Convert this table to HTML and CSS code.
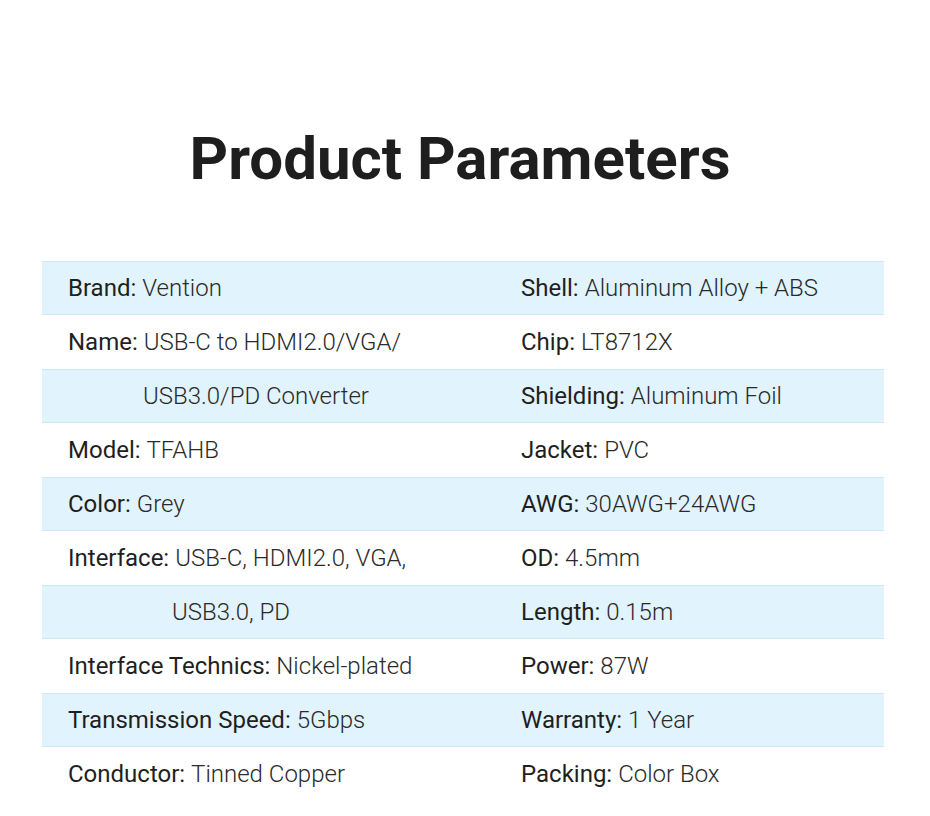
FILE: index.html
```html
<!DOCTYPE html>
<html lang="en">
<head>
<meta charset="utf-8">
<title>Product Parameters</title>
<link rel="stylesheet" href="styles.css">
</head>
<body>
<main class="page">
  <h1 class="title">Product Parameters</h1>
  <section class="params">
    <div class="row alt">
      <div class="cell"><span class="label">Brand:</span> <span class="value">Vention</span></div>
      <div class="cell"><span class="label">Shell:</span> <span class="value">Aluminum Alloy + ABS</span></div>
    </div>
    <div class="row">
      <div class="cell"><span class="label">Name:</span> <span class="value">USB-C to HDMI2.0/VGA/</span></div>
      <div class="cell"><span class="label">Chip:</span> <span class="value">LT8712X</span></div>
    </div>
    <div class="row alt">
      <div class="cell indent-name"><span class="value">USB3.0/PD Converter</span></div>
      <div class="cell"><span class="label">Shielding:</span> <span class="value">Aluminum Foil</span></div>
    </div>
    <div class="row">
      <div class="cell"><span class="label">Model:</span> <span class="value">TFAHB</span></div>
      <div class="cell"><span class="label">Jacket:</span> <span class="value">PVC</span></div>
    </div>
    <div class="row alt">
      <div class="cell"><span class="label">Color:</span> <span class="value">Grey</span></div>
      <div class="cell"><span class="label">AWG:</span> <span class="value">30AWG+24AWG</span></div>
    </div>
    <div class="row">
      <div class="cell"><span class="label">Interface:</span> <span class="value">USB-C, HDMI2.0, VGA,</span></div>
      <div class="cell"><span class="label">OD:</span> <span class="value">4.5mm</span></div>
    </div>
    <div class="row alt">
      <div class="cell indent-interface"><span class="value">USB3.0, PD</span></div>
      <div class="cell"><span class="label">Length:</span> <span class="value">0.15m</span></div>
    </div>
    <div class="row">
      <div class="cell"><span class="label">Interface Technics:</span> <span class="value">Nickel-plated</span></div>
      <div class="cell"><span class="label">Power:</span> <span class="value">87W</span></div>
    </div>
    <div class="row alt">
      <div class="cell"><span class="label">Transmission Speed:</span> <span class="value">5Gbps</span></div>
      <div class="cell"><span class="label">Warranty:</span> <span class="value">1 Year</span></div>
    </div>
    <div class="row">
      <div class="cell"><span class="label">Conductor:</span> <span class="value">Tinned Copper</span></div>
      <div class="cell"><span class="label">Packing:</span> <span class="value">Color Box</span></div>
    </div>
  </section>
</main>
</body>
</html>
```

FILE: styles.css
```css
html, body {
  margin: 0;
  padding: 0;
  background: #ffffff;
}

body {
  font-family: Roboto, "Liberation Sans", Arial, sans-serif;
  color: #222222;
}

.page {
  width: 930px;
  height: 816px;
  overflow: hidden;
}

.title {
  margin: 0;
  padding: 121px 10px 0 0;
  height: 76px;
  line-height: 76px;
  font-size: 60px;
  font-weight: 700;
  color: #1e1e1e;
  text-align: center;
  letter-spacing: 0;
}

.params {
  margin: 64px 0 0 42px;
  width: 842px;
}

.row {
  display: grid;
  grid-template-columns: 453px 1fr;
  height: 54px;
  box-sizing: border-box;
  align-items: center;
}

.row.alt {
  background: #e1f3fc;
  border-top: 1px solid #cfe8f6;
  border-bottom: 1px solid #cfe8f6;
}

.cell {
  padding-left: 26px;
  font-size: 24px;
  line-height: 28px;
  white-space: nowrap;
}

.label {
  font-weight: 400;
  color: #1f1f1f;
}

.value {
  font-weight: 300;
  color: #2a2a2a;
}

.indent-name {
  padding-left: 101px;
}

.indent-interface {
  padding-left: 130px;
}
```
